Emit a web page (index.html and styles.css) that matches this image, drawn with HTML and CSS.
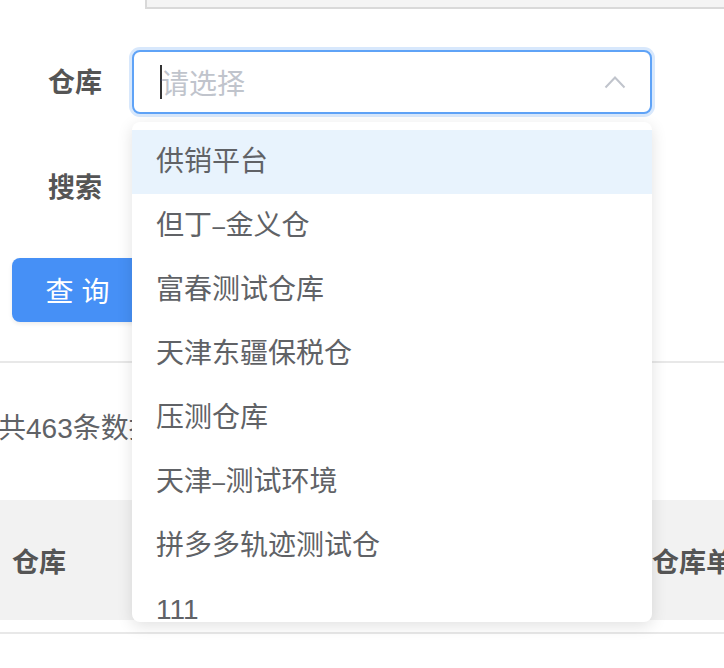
FILE: index.html
```html
<!DOCTYPE html>
<html lang="zh-CN">
<head>
<meta charset="utf-8">
<link rel="stylesheet" href="styles.css">
</head>
<body>
<div class="page">
  <div class="top-box"></div>

  <div class="form-row row-first">
    <label class="label">仓库</label>
    <div class="select">
      <div class="select-input">
        <span class="caret"></span><span class="placeholder">请选择</span>
        <svg class="chevron" width="22" height="14" viewBox="0 0 22 14"><polyline points="1.5,12.5 11,2.5 20.5,12.5" fill="none" stroke="#c0c4cc" stroke-width="2"/></svg>
      </div>
      <ul class="dropdown">
        <li class="item active">供销平台</li>
        <li class="item">但丁<span class="dash">–</span>金义仓</li>
        <li class="item">富春测试仓库</li>
        <li class="item">天津东疆保税仓</li>
        <li class="item">压测仓库</li>
        <li class="item">天津<span class="dash">–</span>测试环境</li>
        <li class="item">拼多多轨迹测试仓</li>
        <li class="item">111</li>
      </ul>
    </div>
  </div>

  <div class="form-row row-second">
    <label class="label">搜索</label>
    <div class="plain-input"></div>
  </div>

  <button class="btn">查 询</button>

  <div class="divider"></div>

  <div class="total">共463条数据</div>

  <div class="thead">
    <div class="th th-first">仓库</div>
    <div class="th th-last">仓库单号</div>
  </div>
  <div class="table-line"></div>
  <div class="trow">供销平台</div>
</div>
</body>
</html>
```

FILE: styles.css
```css
html, body {
  margin: 0;
  padding: 0;
  background: #ffffff;
}
body {
  font-family: "Liberation Sans", "Noto Sans CJK SC", sans-serif;
  font-size: 28px;
  color: #606266;
  overflow: hidden;
  width: 724px;
  height: 668px;
}
.page {
  position: relative;
  width: 724px;
}
.top-box {
  margin-left: 145px;
  height: 7px;
  background: #f4f4f4;
  border-left: 2px solid #d9d9d9;
  border-bottom: 2px solid #d9d9d9;
}
.form-row {
  display: flex;
  align-items: center;
  height: 64px;
}
.row-first {
  margin-top: 41px;
}
.row-second {
  margin-top: 41px;
}
.label {
  width: 132px;
  box-sizing: border-box;
  padding-right: 30px;
  text-align: right;
  font-weight: bold;
  color: #555555;
  font-size: 27px;
  margin-top: -3px;
}
.select {
  position: relative;
  width: 520px;
  height: 64px;
}
.select-input {
  box-sizing: border-box;
  height: 64px;
  border: 2px solid #5fa3f7;
  border-radius: 8px;
  box-shadow: 0 0 0 3px #d8e8fc;
  display: flex;
  align-items: center;
  padding-left: 26px;
  padding-right: 24px;
  background: #fff;
}
.caret {
  display: inline-block;
  width: 2px;
  height: 34px;
  background: #333;
  margin-right: -1px;
}
.placeholder {
  color: #c0c4cc;
  flex: 1;
}
.chevron {
  display: block;
}
.dropdown {
  position: absolute;
  left: 0;
  top: 72px;
  width: 520px;
  height: 500px;
  margin: 0;
  padding: 8px 0 0;
  box-sizing: border-box;
  list-style: none;
  background: #fff;
  border-radius: 8px;
  box-shadow: 0 4px 16px rgba(0, 0, 0, 0.12);
  overflow: hidden;
  z-index: 10;
}
.item {
  height: 64px;
  line-height: 64px;
  padding: 0 24px;
  color: #606266;
  white-space: nowrap;
}
.dash {
  display: inline-block;
  transform: scaleX(0.8);
  margin: 0 -1px;
}
.item.active {
  background: #e8f3fd;
}
.plain-input {
  width: 520px;
  height: 64px;
}
.btn {
  display: block;
  margin: 39px 0 0 12px;
  width: 131px;
  height: 64px;
  border: none;
  border-radius: 8px;
  background: #4690f6;
  color: #fff;
  font-family: inherit;
  font-size: 28px;
  box-shadow: 0 2px 4px rgba(0, 0, 0, 0.08);
  padding: 0;
}
.divider {
  margin-top: 39px;
  height: 2px;
  background: #e8e8e8;
}
.total {
  margin-top: 46px;
  margin-left: -2px;
  height: 40px;
  line-height: 40px;
  color: #606266;
}
.thead {
  margin-top: 51px;
  height: 120px;
  background: #f2f2f2;
  display: flex;
  align-items: center;
  justify-content: space-between;
  font-weight: bold;
  color: #555555;
  font-size: 27px;
}
.th-first {
  padding-left: 12px;
}
.th-last {
  width: 72px;
  overflow: hidden;
  white-space: nowrap;
}
.table-line {
  margin-top: 12px;
  height: 2px;
  background: #e8e8e8;
}
.trow {
  margin-top: 27px;
  padding-left: 12px;
  color: #606266;
}
```
